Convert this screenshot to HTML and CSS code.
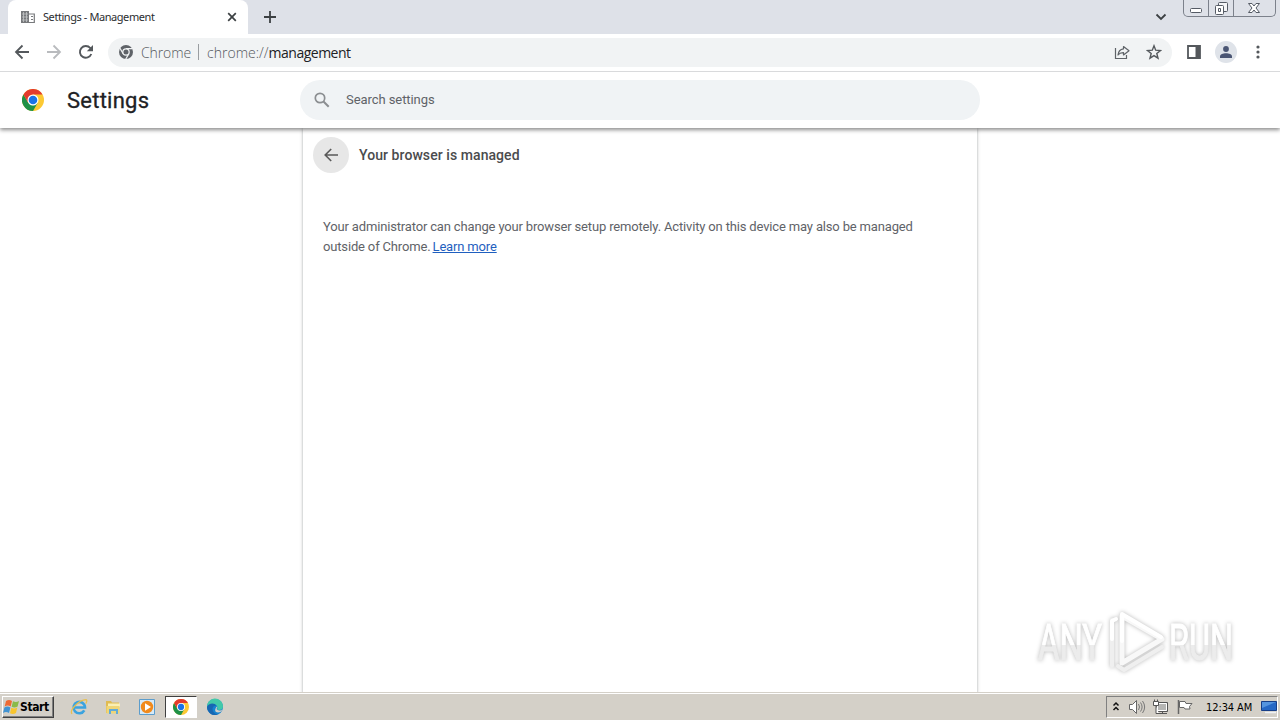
FILE: index.html
```html
<!DOCTYPE html>
<html lang="en">
<head>
    <meta charset="UTF-8">
    <meta name="viewport" content="width=device-width, initial-scale=1.0">
    <title>Settings - Management</title>
    <link rel="stylesheet" href="styles.css">
</head>
<body>

    <!-- Shared Chrome logo -->
    <svg class="defs" width="0" height="0">
        <symbol id="chrome" viewBox="0 0 24 24">
            <circle cx="12" cy="12" r="12" fill="#fcc934"/>
            <path d="M1.6 6A12 12 0 0 0 12 24L17.2 15 12 18 6.8 15z" fill="#1e9147"/>
            <path d="M12 6h10.4A12 12 0 0 0 1.6 6l5.2 9z" fill="#e33b2e"/>
            <circle cx="12" cy="12" r="6" fill="#fff"/>
            <circle cx="12" cy="12" r="4.7" fill="#1a73e8"/>
        </symbol>
    </svg>

    <!-- Tab Strip -->
    <div class="tabstrip">
        <div class="tab">
            <svg class="favicon" width="16" height="16" viewBox="0 0 16 16">
                <path d="M1 2h8v12H1z" fill="#77797c"/>
                <path d="M2 5h6M2 8h6M2 11h6M3.5 3v10M6.5 3v10" stroke="#c4c6c8" stroke-width=".8"/>
                <path d="M9 5h5.3v8.5H9M11 7.500h2M11 10.500h2" fill="none" stroke="#77797c" stroke-width="1.2"/>
            </svg>
            <span class="tab-title">Settings - Management</span>
            <svg class="tab-close" width="10" height="10" viewBox="0 0 10 10"><path d="M1.200 1.200l7.600 7.600M8.800 1.200L1.200 8.800" stroke="#3c4043" stroke-width="1.700"/></svg>
        </div>
        <svg class="new-tab" width="12" height="12" viewBox="0 0 12 12"><path d="M6 0v12M0 6h12" stroke="#3c4043" stroke-width="1.800"/></svg>
        <svg class="tab-search" width="12" height="8" viewBox="0 0 12 8"><path d="M1.500 1.500L6 6l4.500-4.500" fill="none" stroke="#3c4043" stroke-width="1.800"/></svg>
        <div class="window-buttons">
            <span class="min"><svg width="14" height="16" viewBox="0 0 14 16"><rect x="1.500" y="8.500" width="11" height="4" rx="1" fill="#fff" stroke="#555b65"/></svg></span>
            <span class="max"><svg width="14" height="16" viewBox="0 0 14 16"><rect x="4.500" y="2.500" width="9" height="9" rx="1" fill="#f4f5f7" stroke="#555b65"/><rect x="1.500" y="5.500" width="8" height="9" rx="1" fill="#fff" stroke="#555b65"/><path d="M4.500 8.500h2v3h-2z" fill="none" stroke="#555b65"/></svg></span>
            <span class="close"><svg width="14" height="16" viewBox="0 0 14 16"><path d="M1.500 3.500H5l2 2.500 2-2.500h3.500L9 8l3.500 4.500H9L7 10l-2 2.500H1.500L5 8z" fill="#fff" stroke="#555b65"/></svg></span>
        </div>
    </div>

    <!-- Toolbar -->
    <div class="toolbar">
        <svg class="nav" width="16" height="16" viewBox="0 0 16 16"><path d="M15 8H2M8.500 1.500L2 8l6.500 6.500" fill="none" stroke="#54585c" stroke-width="1.800"/></svg>
        <svg class="nav" width="16" height="16" viewBox="0 0 16 16"><path d="M1 8h13M7.500 1.500L14 8l-6.500 6.500" fill="none" stroke="#b9bbbe" stroke-width="1.800"/></svg>
        <svg class="nav" width="16" height="16" viewBox="0 0 16 16"><path d="M13.300 10A5.900 5.900 0 1 1 12.300 4L14 5.700" fill="none" stroke="#54585c" stroke-width="1.900"/><path d="M15 1v6.200H8.800z" fill="#54585c"/></svg>
        <div class="omnibox">
            <svg width="16" height="16" viewBox="0 0 24 24">
                <circle cx="12" cy="12" r="10.500" fill="#5f6368"/>
                <path d="M12 7h10M7.700 14.500L2.700 6M16.300 14.500l-5 8.700" stroke="#f1f3f4" stroke-width="1.800"/>
                <circle cx="12" cy="12" r="5.700" fill="#f1f3f4"/>
                <circle cx="12" cy="12" r="3.800" fill="#5f6368"/>
            </svg>
            <span class="origin">Chrome</span>
            <span class="divider"></span>
            <span class="url">chrome://<b>management</b></span>
            <svg class="share" width="16" height="16" viewBox="0 0 16 16"><path d="M1.500 4v10.500h11V11" fill="none" stroke="#5f6368" stroke-width="1.200"/><path d="M9.500 2.500L15 6.700l-5.500 4.200V8.600C7 8.500 5.200 9.300 4 11c.3-3.500 2.200-5.800 5.500-6.200z" fill="none" stroke="#5f6368" stroke-width="1.200" stroke-linejoin="round"/></svg>
            <svg class="star" width="16" height="16" viewBox="0 0 16 16"><path d="M8 1.800l1.700 4.400 4.800.3-3.700 3 1.200 4.700L8 11.600l-4 2.600 1.200-4.700-3.700-3 4.800-.3z" fill="none" stroke="#54585c" stroke-width="1.400"/></svg>
        </div>
        <svg class="panel" width="14" height="14" viewBox="0 0 14 14"><path d="M1 1h12v12H1z" fill="#fff" stroke="#54585c" stroke-width="1.800"/><path d="M8.500 1H13v12H8.500z" fill="#54585c"/></svg>
        <span class="avatar"><svg width="12" height="12" viewBox="0 0 12 12"><circle cx="6" cy="3" r="2.900" fill="#4a5573"/><path d="M0 12v-1.500C0 8.300 3 7.200 6 7.200s6 1.100 6 3.300V12z" fill="#4a5573"/></svg></span>
        <svg class="dots" width="4" height="14" viewBox="0 0 4 14"><circle cx="2" cy="2" r="1.600" fill="#54585c"/><circle cx="2" cy="7" r="1.600" fill="#54585c"/><circle cx="2" cy="12" r="1.600" fill="#54585c"/></svg>
    </div>

    <!-- Settings Header -->
    <header>
        <svg class="logo" width="22" height="22"><use href="#chrome"/></svg>
        <h1>Settings</h1>
        <div class="search">
            <svg width="16" height="16" viewBox="0 0 16 16"><circle cx="6" cy="6" r="4.700" fill="none" stroke="#8b8e91" stroke-width="1.700"/><path d="M9.500 9.500l5.200 5.200" stroke="#8b8e91" stroke-width="2"/></svg>
            <span>Search settings</span>
        </div>
    </header>

    <!-- Main Content -->
    <main>
        <section class="page">
            <div class="page-title">
                <span class="back"><svg width="14" height="14" viewBox="0 0 14 14"><path d="M14 7H1.500M7.200 1L1.200 7l6 6" fill="none" stroke="#5a5a5a" stroke-width="1.600"/></svg></span>
                <h2>Your browser is managed</h2>
            </div>
            <p>Your administrator can change your browser setup remotely. Activity on this device may also be managed<br>outside of Chrome. <a href="#">Learn more</a></p>
        </section>
    </main>

    <!-- Watermark -->
    <svg class="watermark" width="250" height="76" viewBox="0 0 250 76">
        <defs>
            <linearGradient id="fade" x1="0" y1="0" x2="0" y2="1">
                <stop offset=".55" stop-color="#fff"/>
                <stop offset=".55" stop-color="#ececec"/>
            </linearGradient>
        </defs>
        <text x="8" y="56.500" textLength="64" lengthAdjust="spacingAndGlyphs">ANY</text>
        <text x="139" y="56.500" textLength="64" lengthAdjust="spacingAndGlyphs">RUN</text>
        <g fill="none" stroke-linejoin="round" stroke-linecap="round">
            <path d="M92 13v47l40-24z" stroke="#f8f8f8" stroke-width="5"/>
            <path d="M82 17v46M88 63l6 4 38-23" stroke="#efefef" stroke-width="4"/>
            <path d="M92 38V11l39 23M82 36V18l4-2" stroke="#fff" stroke-width="4"/>
        </g>
    </svg>

    <!-- Taskbar -->
    <footer>
        <div class="start">
            <svg width="17" height="18" viewBox="0 0 17 16">
                <path d="M3 2c2-1.500 4-1.500 6 0L7.700 7.500c-2-1.300-4-1.300-6 0z" fill="#ee6a34"/>
                <path d="M10 2.300c2 1.200 4 1 6-.2L14.600 7.500c-2 1.200-4 1.300-6 .3z" fill="#8aba4a"/>
                <path d="M1.400 8.500c2-1.400 4-1.400 6 0L6 14c-2-1.300-4-1.300-6 0z" fill="#4293d2"/>
                <path d="M8.300 8.800c2 1.200 4 1 6-.2L13 14c-2 1.300-4 1.300-6 .3z" fill="#f8c52e"/>
            </svg>
            <span>Start</span>
        </div>
        <div class="tasks">
            <span class="task">
                <svg width="18" height="18" viewBox="0 0 18 18"><path d="M14.300 12.300A5.700 5.700 0 1 1 15 9.500H5" fill="none" stroke="#3ba3df" stroke-width="2.600"/><path d="M2 16C-1 12 9 2 16 1.700c1.600.4.500 3-.3 4" fill="none" stroke="#e9bf4e" stroke-width="1.200"/></svg>
            </span>
            <span class="task">
                <svg width="18" height="18" viewBox="0 0 18 18"><path d="M2 3h5l1 1.500h7V15H2z" fill="#e0bb52"/><path d="M4 5.500h12V9H4z" fill="#f9efb5"/><path d="M2.500 8h13v7.500h-13z" fill="#f0d676"/><path d="M5 16v-5h9v5h-2v-3H7v3z" fill="#62abd8"/></svg>
            </span>
            <span class="task">
                <svg width="18" height="18" viewBox="0 0 18 18"><path d="M1.500 1.500h15v15h-15z" fill="#d6eaf8" stroke="#5c9dcc"/><circle cx="9" cy="9" r="6.200" fill="#f18a1c"/><path d="M7 5.200L13 9l-6 3.800z" fill="#fff"/></svg>
            </span>
            <span class="task active"><svg width="16" height="16"><use href="#chrome"/></svg></span>
            <span class="task">
                <svg width="18" height="18" viewBox="0 0 18 18"><circle cx="9" cy="9" r="8" fill="#1683d0"/><path d="M1 9a8 8 0 0 1 16-1c.3 3.500-3 4.600-6 3.600C13 8 9 5 5 6.200 3 6.800 1.500 8 1 9z" fill="#42c9a9"/><path d="M1 9c1-4 8-5 9.500-1C7 7 5 11 8 14.500c1 1 2.500 2 4 2A8 8 0 0 1 1 9z" fill="#1767b2"/><path d="M11 8.500c1 1.500-1.300 2 .2 3.300 1.600 1 4 .8 5.200-.6-.4 2-2.400 3.300-4.400 3.300-3 0-4-3-1-6z" fill="#d4d0c8"/></svg>
            </span>
        </div>
        <div class="tray">
            <svg width="8" height="12" viewBox="0 0 8 12"><path d="M1.500 4.500L4 2l2.500 2.500M1.500 9L4 6.500 6.500 9" fill="none" stroke="#111" stroke-width="1.500"/></svg>
            <svg class="sound" width="18" height="16" viewBox="0 0 18 16"><path d="M1.500 5.500h3l4-4v13l-4-4h-3z" fill="#fff" stroke="#666"/><path d="M10.500 5q2 3 0 6M12.500 3.500q3.200 4.500 0 9M14.500 2q4.300 6 0 12" fill="none" stroke="#777"/></svg>
            <svg class="net" width="17" height="16" viewBox="0 0 17 16"><path d="M4.500 3.500h11v9h-11z" fill="#b5b5b3" stroke="#555"/><path d="M5.500 4.500h9v7h-9z" fill="none" stroke="#fff"/><path d="M7 14.500h8M10.500 13v2" stroke="#555"/><path d="M1.500 2.500h5v4h-5zM2.500.5v2M5.500.5v2M4 7v7.500h3" fill="#fff" stroke="#555"/></svg>
            <svg class="flag" width="17" height="16" viewBox="0 0 17 16"><path d="M1.500 1v14" stroke="#666" stroke-width="1.500"/><path d="M2.500 2.500h5.500l1 2h6l-2.500 3 .5 2.500H8l-1-1.500H2.500z" fill="#fff" stroke="#666"/></svg>
            <span class="clock">12:34 AM</span>
            <svg class="desktop" width="16" height="14" viewBox="0 0 16 14"><path d="M.5 1.500h15v9H.5z" fill="#2668c5" stroke="#173f88"/><path d="M1 2h14L1 8z" fill="#5595df"/><path d="M4 12.500h11" stroke="#eef1f5" stroke-width="1.500"/></svg>
        </div>
    </footer>

</body>
</html>
```
FILE: styles.css
```css
body {
    display: flex;
    flex-direction: column;
    width: 1280px;
    height: 720px;
    margin: 0;
    overflow: hidden;
    background-color: #fff;
    font-family: Roboto, sans-serif;
}
svg {
    display: block;
    flex: none;
}
.defs {
    position: absolute;
}

/* Tab strip */
.tabstrip {
    display: flex;
    align-items: center;
    flex: none;
    height: 34px;
    padding-left: 8px;
    background-color: #dee1e8;
}
.tab {
    display: flex;
    align-items: center;
    box-sizing: border-box;
    width: 240px;
    height: 34px;
    padding: 0 11px 0 12px;
    border-radius: 8px 8px 0 0;
    background-color: #fff;
}
.tab-title {
    margin-left: 7px;
    padding-bottom: 1px;
    font-family: "Noto Sans", sans-serif;
    font-size: 11px;
    letter-spacing: -0.43px;
    color: #2b2d30;
    white-space: nowrap;
}
.tab-close {
    margin-left: auto;
}
.new-tab {
    margin-left: 16px;
}
.tab-search {
    margin-left: auto;
    margin-right: 16px;
}
.window-buttons {
    display: flex;
    align-self: flex-start;
    box-sizing: border-box;
    width: 93px;
    height: 17px;
    margin-right: 4px;
    border: 1px solid #7c818b;
    border-top: 0;
    border-radius: 0 0 5px 5px;
}
.window-buttons span {
    display: flex;
    justify-content: center;
    width: 25px;
    border-right: 1px solid #7c818b;
}
.window-buttons .max {
    width: 24px;
}
.window-buttons .close {
    width: 42px;
    border: 0;
}

/* Toolbar */
.toolbar {
    display: flex;
    align-items: center;
    flex: none;
    box-sizing: border-box;
    height: 38px;
    padding-left: 14px;
    padding-bottom: 1px;
    border-bottom: 1px solid #d9dadc;
}
.nav {
    margin-right: 16px;
}
.omnibox {
    display: flex;
    align-items: center;
    box-sizing: border-box;
    width: 1064px;
    height: 29px;
    margin-left: -2px;
    padding: 0 10px;
    border-radius: 15px;
    background-color: #f1f3f4;
    font-family: "Open Sans", "Noto Sans", sans-serif;
    font-size: 14px;
    font-weight: 300;
    color: #55595e;
    white-space: nowrap;
}
.origin {
    margin-left: 7px;
    letter-spacing: -0.1px;
}
.divider {
    width: 1px;
    height: 16px;
    margin: 0 8px 0 7px;
    background-color: #9a9da1;
}
.url b {
    font-weight: 400;
    letter-spacing: -0.5px;
    color: #202124;
}
.share {
    margin-left: auto;
    margin-right: 16px;
}
.panel {
    margin-left: 15px;
}
.avatar {
    display: flex;
    align-items: center;
    justify-content: center;
    width: 22px;
    height: 22px;
    margin-left: 14px;
    border-radius: 50%;
    background-color: #dfe3e9;
}
.dots {
    margin-left: 19px;
}

/* Settings header */
header {
    position: relative;
    display: flex;
    align-items: center;
    flex: none;
    height: 56px;
    padding-left: 22px;
    background-color: #fff;
    box-shadow: 0 2px 4px rgba(0, 0, 0, 0.45);
    clip-path: inset(0 0 -8px 0);
}
h1 {
    width: 233px;
    margin: 0 0 0 23px;
    font-size: 22px;
    font-weight: 400;
    letter-spacing: 0.25px;
    color: #202124;
    -webkit-text-stroke: 0.3px #202124;
}
.search {
    display: flex;
    align-items: center;
    box-sizing: border-box;
    width: 680px;
    height: 40px;
    padding-left: 14px;
    border-radius: 20px;
    background-color: #f0f3f5;
    font-size: 13px;
    letter-spacing: -0.07px;
    color: #5f6368;
}
.search span {
    margin-left: 16px;
    padding-bottom: 2px;
}

/* Content */
main {
    display: flex;
    justify-content: center;
    flex: 1;
}
.page {
    box-sizing: border-box;
    width: 674px;
    padding: 9px 10px;
    box-shadow: 0 1px 3px 1px rgba(60, 64, 67, 0.15), 0 1px 2px rgba(60, 64, 67, 0.3);
}
.page-title {
    display: flex;
    align-items: center;
}
.back {
    display: flex;
    align-items: center;
    justify-content: center;
    width: 36px;
    height: 36px;
    border-radius: 50%;
    background-color: #e7e7e7;
}
h2 {
    margin: 0 0 0 10px;
    font-size: 14px;
    font-weight: 500;
    letter-spacing: 0.07px;
    color: #4a4b4d;
}
p {
    margin: 44px 10px 0;
    font-size: 13px;
    line-height: 20px;
    letter-spacing: -0.16px;
    color: #5f6368;
    white-space: nowrap;
}
p a {
    margin-left: -1px;
    color: #1f5fbf;
}

/* Watermark */
.watermark {
    position: absolute;
    left: 1030px;
    top: 603px;
    filter: drop-shadow(0 0 2px rgba(0, 0, 0, 0.28));
}
.watermark text {
    font-family: Roboto, sans-serif;
    font-size: 50px;
    fill: url(#fade);
    stroke: url(#fade);
    stroke-width: 1px;
}

/* Taskbar */
footer {
    position: relative;
    display: flex;
    align-items: center;
    flex: none;
    box-sizing: border-box;
    height: 28px;
    padding: 1px 2px 0;
    border-top: 1px solid #d4d0c8;
    background-color: #d4d0c8;
    box-shadow: inset 0 1px #fff;
    font-family: "DejaVu Sans Condensed", "DejaVu Sans", sans-serif;
    font-size: 11px;
    color: #000;
}
.start {
    display: flex;
    align-items: center;
    box-sizing: border-box;
    width: 52px;
    height: 22px;
    border: 1px solid;
    border-color: #fff #404040 #404040 #fff;
    box-shadow: inset -1px -1px #808080;
    font-size: 12px;
    font-weight: bold;
    letter-spacing: -0.4px;
}
.tasks {
    display: flex;
    margin-left: 9px;
}
.task {
    display: flex;
    align-items: center;
    justify-content: center;
    box-sizing: border-box;
    width: 32px;
    height: 22px;
    margin-right: 2px;
}
.active {
    border: 1px solid;
    border-color: #404040 #fff #fff #404040;
    background-color: #fff;
}
.tray {
    display: flex;
    align-items: center;
    box-sizing: border-box;
    width: 172px;
    height: 22px;
    margin-left: auto;
    padding-left: 5px;
    border: 1px solid;
    border-color: #808080 #fff #fff #808080;
}
.sound {
    margin-left: 8px;
}
.net {
    margin-left: 6px;
}
.flag {
    margin-left: 8px;
}
.clock {
    margin-left: 12px;
    letter-spacing: -0.1px;
    white-space: nowrap;
}
.desktop {
    margin-left: auto;
}
```
